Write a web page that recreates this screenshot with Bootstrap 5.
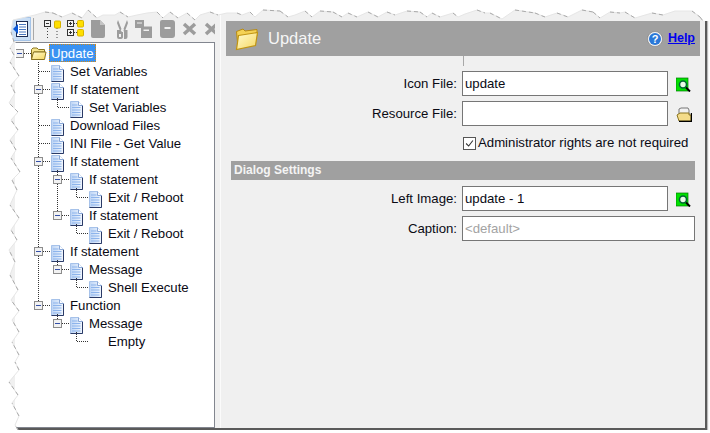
<!DOCTYPE html>
<html lang="en">
<head>
  <meta charset="UTF-8">
  <title>Update</title>
  <link href="https://cdn.jsdelivr.net/npm/bootstrap@5.3.2/dist/css/bootstrap.min.css" rel="stylesheet">
  <style>
    html, body { margin: 0; background: #fff; overflow: hidden; }
    body { font-family: "Liberation Sans", Arial, sans-serif; font-size: 13.2px; color: #0a0a14; }
    .fijo { flex: none; }
    .ventana { width: 707px; height: 430px; background: #f0f0f0; border-right: 2px solid #5a5a5a; border-bottom: 2px solid #5a5a5a; box-shadow: 1px 1px 1px #bbb; }
    .col-izq { width: 215px; height: 428px; padding-top: 17px; overflow: hidden; }
    .barra { height: 25px; padding-left: 11px; }
    .btn-activo { width: 20px; height: 24px; background: #c9def5; border: 1px solid #a5c4e8; }
    .separador { width: 1px; height: 22px; background: #a8a8a8; margin: 1px 6px 0 2px; }
    .slot { width: 23px; height: 24px; flex: none; }
    .arbol { margin-left: 15px; background: #fff; border: 1px solid #82868f; border-left-color: #fff; padding-top: 1px; height: 386px; }
    .fila-arbol { height: 18px; white-space: nowrap; }
    .guia { flex: none; display: block; }
    .ico-slot { width: 13px; flex: none; margin-right: 4px; height: 18px; padding-top: 1px; }
    .ico-carpeta { margin: 2px 0 0 -2px; display: block; }
    .etiqueta { border: 1px dotted transparent; padding: 0 1px; line-height: 17px; height: 18px; }
    .etiqueta.activa { background: #3a92f2; color: #fff; border-color: #d98a10; }
    .panel { width: 485px; border-left: 1px solid #fbfbfb; margin-left: 5px; padding: 21px 5px 0 5px; }
    .cabecera { height: 35px; background: #a0a0a0; padding: 0 5px 0 9px; color: #f6f6f6; font-size: 16.5px; }
    .titulo { margin-left: 9px; }
    .ayuda { font-size: 12.5px; font-weight: 700; color: #0000ee; margin-left: 5px; }
    .marca { width: 1px; height: 10px; background: #a8a8a8; margin: 0 0 5px 237px; }
    .rotulo { width: 231px; margin-right: 5px; flex: none; text-align: right; }
    .caja.form-control { width: 206px; height: 25px; min-height: 0; padding: 0 2px; border: 1px solid #767676; border-radius: 0; font-size: 13.2px; color: #0a0a14; box-shadow: none; flex: none; }
    .caja.larga { width: 233px; }
    .caja::placeholder { color: #a3a3a3; opacity: 1; }
    .ico-campo { margin: 2px 0 0 8px; flex: none; }
    .fila-campo { margin-bottom: 5px; height: 25px; }
    .fila-check { height: 14px; margin: 10px 0 11px 236px; }
    .form-check-input.marcar { width: 13px; height: 13px; margin: 0 2px 0 1px; border: 1px solid #555; border-radius: 0; background-color: #fff; flex: none; background-image: url("data:image/svg+xml,%3csvg xmlns='http://www.w3.org/2000/svg' viewBox='0 0 13 13'%3e%3cpath fill='none' stroke='%23333' stroke-width='1.3' d='M2.5 6.5l3 3 5-6.5'/%3e%3c/svg%3e"); background-size: 100% 100%; }
    .seccion { height: 19px; margin: 0 0 6px 5px; width: 464px; padding-left: 3px; background: #a0a0a0; color: #f4f4f4; font-weight: 700; font-size: 12px; line-height: 19px; }
    .rasgado { top: 0; left: 0; pointer-events: none; }
  </style>
</head>
<body>
  <svg width="0" height="0" class="position-absolute">
    <defs>
      <linearGradient id="gHoja" x1="0" y1="0" x2="1" y2="0">
        <stop offset="0" stop-color="#bcd4f5"/><stop offset="1" stop-color="#f2f7fe"/>
      </linearGradient>
      <linearGradient id="gCarpeta" x1="0" y1="0" x2="1" y2="1">
        <stop offset="0" stop-color="#fffbd0"/><stop offset="1" stop-color="#f6d860"/>
      </linearGradient>
      <symbol id="hoja" viewBox="0 0 13 17">
        <path d="M.5.5H8.5L12.5 4.5V16.5H.5Z" fill="url(#gHoja)" stroke="#a6c2ea"/>
        <path d="M12.5 4.5V16.5H.5" fill="none" stroke="#2a3a66"/>
        <path d="M8.5.5V4.5H12.5" fill="#fff" stroke="#8aa8d8"/>
        <path d="M2 4H7.5M2 6.5H10.5M2 9H10.5M2 11.5H10.5M2 14H10.5" stroke="#8db4ec"/>
      </symbol>
      <symbol id="carpetaAbierta" viewBox="0 0 17 14">
        <path d="M1.5 12.5V2.500L3 1H7L8.500 2.500H14.500V5H4Z" fill="#f6e58c" stroke="#8a7420"/>
        <path d="M1.500 12.500L3.500 5H16L14.500 12.500Z" fill="url(#gCarpeta)" stroke="#8a7420"/>
      </symbol>
      <symbol id="lupa" viewBox="0 0 15 15">
        <rect x="0" y="1" width="12" height="13" fill="#00e000" stroke="#007a00" stroke-width=".7"/>
        <circle cx="7" cy="7.500" r="3.500" fill="#eafbe8" stroke="#063" stroke-width="1.600"/>
        <path d="M10 10.500L14 14.500" stroke="#000" stroke-width="2"/>
      </symbol>
    </defs>
  </svg>

  <div class="ventana d-flex">
    <div class="col-izq fijo">
      <div class="barra d-flex align-items-start">
        <div class="btn-activo d-flex align-items-center justify-content-center fijo">
          <svg width="16" height="18" viewBox="0 0 16 18">
            <rect x="3.500" y="1.500" width="11" height="15" fill="#fff" stroke="#1d2b52"/>
            <path d="M6 4.500H13M6 7H13M6 9.500H13M6 12H13M6 14.500H13" stroke="#4a78c0"/>
            <path d="M5 4V14L0 9Z" fill="#0a58d8"/>
          </svg>
        </div>
        <div class="separador fijo"></div>
        <svg class="slot" viewBox="0 0 23 24">
          <rect x="4.500" y="3.500" width="6" height="6" fill="#f4f4f4" stroke="#333"/><path d="M6 6.500H9" stroke="#333"/>
          <path d="M7.500 11V23M17 11V23" stroke="#444" stroke-dasharray="1 2"/>
          <rect x="14.500" y="4" width="6" height="7" rx="1" fill="#ffdf00" stroke="#d8b400"/>
        </svg>
        <svg class="slot" viewBox="0 0 23 24">
          <rect x="4.500" y="3.500" width="6" height="6" fill="#f4f4f4" stroke="#333"/><path d="M6 6.500H9M7.500 5V8" stroke="#333"/>
          <rect x="4.500" y="12.500" width="6" height="6" fill="#f4f4f4" stroke="#333"/><path d="M6 15.500H9M7.500 14V17" stroke="#333"/>
          <path d="M11 6.500H14M11 15.500H14" stroke="#444" stroke-dasharray="1 1"/>
          <rect x="14.500" y="3.500" width="6" height="6.500" rx="1" fill="#ffdf00" stroke="#d8b400"/>
          <rect x="14.500" y="12.500" width="6" height="6.500" rx="1" fill="#ffdf00" stroke="#d8b400"/>
        </svg>
        <svg class="slot" viewBox="0 0 23 24">
          <path d="M5 3H14L19 8V19Q19 21 17 21H7Q5 21 5 19Z" fill="#9c9c9c"/><path d="M14 3V8H19" fill="#c4c4c4"/>
        </svg>
        <svg class="slot" viewBox="0 0 23 24" fill="#9c9c9c">
          <path d="M9 3L12.500 12L11 14L8 6ZM18 3L14.500 12L16 14L19 6Z"/>
          <path d="M8 13H11.500L13 15H14V20Q14 22 11 22H10Q8 22 8 20ZM10 17V20H12V17Z" fill-rule="evenodd"/>
          <path d="M14.500 13H18.500V20Q18.500 22 16.500 22H15V15Z"/>
        </svg>
        <svg class="slot" viewBox="0 0 23 24" fill="#9c9c9c">
          <path d="M3 3H12V11H3ZM5 5.500V6.500H10V5.500Z" fill-rule="evenodd"/>
          <path d="M9 9.500H20V21H9ZM11.500 12.500V14H17V12.500Z" fill-rule="evenodd"/>
        </svg>
        <svg class="slot" viewBox="0 0 23 24" fill="#9c9c9c">
          <path d="M7 3H17Q20 3 20 6V18Q20 21 17 21H8Q5 21 5 18V5Q5 3 7 3ZM9.500 10V12H15.500V10Z" fill-rule="evenodd"/>
        </svg>
        <svg class="slot" viewBox="0 0 23 24">
          <path d="M6 7L17 17M17 7L6 17" stroke="#9c9c9c" stroke-width="3.500"/>
        </svg>
        <svg class="slot" viewBox="0 0 23 24">
          <path d="M5 7L16 17M16 7L5 17" stroke="#9c9c9c" stroke-width="3.500"/>
        </svg>
      </div>
      <div class="arbol" id="arbol"></div>
    </div>

    <div class="panel fijo">
      <div class="cabecera d-flex align-items-center">
        <svg width="24" height="24" viewBox="0 0 24 24">
          <path d="M1.500 4.500L8 2L10 4L22 2.500V9L3 21Z" fill="#f4d255" stroke="#b88a10"/>
          <path d="M3.500 8.500L22.500 5.500L20.500 18.500L1.500 22.500Z" fill="url(#gCarpeta)" stroke="#c09412" stroke-width="1.200"/>
        </svg>
        <span class="titulo">Update</span>
        <svg class="ms-auto" width="16" height="16" viewBox="0 0 16 16">
          <circle cx="8" cy="8" r="7.500" fill="#f4f4f4" stroke="#777" stroke-width=".6"/>
          <circle cx="8" cy="8" r="6" fill="#2a78d8"/>
          <text x="8" y="12.200" text-anchor="middle" font-family="Liberation Sans" font-weight="700" font-size="11" fill="#fff">?</text>
        </svg>
        <a class="ayuda" href="#">Help</a>
      </div>
      <div class="marca"></div>

      <div class="fila-campo d-flex align-items-center">
        <label class="rotulo" for="iconFile">Icon File:</label>
        <input id="iconFile" class="caja form-control" type="text" value="update">
        <svg class="ico-campo" width="15" height="15"><use href="#lupa"/></svg>
      </div>
      <div class="fila-campo d-flex align-items-center mb-0">
        <label class="rotulo" for="resFile">Resource File:</label>
        <input id="resFile" class="caja form-control" type="text">
        <svg class="ico-campo" width="16" height="15" viewBox="0 0 16 15">
          <path d="M3 7V2L5 1H12L13 3V8Z" fill="#f2f2f2" stroke="#777"/>
          <path d="M1 8L4 6H13V8H15V14H3Z" fill="#f4dc8a" stroke="#8a7420"/>
          <path d="M15.500 6V14.500H3" fill="none" stroke="#000" stroke-width="1.400"/>
        </svg>
      </div>

      <div class="fila-check d-flex align-items-center">
        <input id="admin" class="form-check-input marcar" type="checkbox" checked>
        <label for="admin">Administrator rights are not required</label>
      </div>

      <div class="seccion">Dialog Settings</div>

      <div class="fila-campo d-flex align-items-center">
        <label class="rotulo" for="leftImg">Left Image:</label>
        <input id="leftImg" class="caja form-control" type="text" value="update - 1">
        <svg class="ico-campo" width="15" height="15"><use href="#lupa"/></svg>
      </div>
      <div class="fila-campo d-flex align-items-center">
        <label class="rotulo" for="caption">Caption:</label>
        <input id="caption" class="caja larga form-control" type="text" placeholder="<default>">
      </div>
    </div>
  </div>

  <svg id="rasgado" class="rasgado position-absolute" width="710" height="433" viewBox="0 0 710 433"></svg>

  <script>
    const arbol = { t: "Update", hijos: [
      { t: "Set Variables" },
      { t: "If statement", hijos: [ { t: "Set Variables" } ] },
      { t: "Download Files" },
      { t: "INI File - Get Value" },
      { t: "If statement", hijos: [
        { t: "If statement", hijos: [ { t: "Exit / Reboot" } ] },
        { t: "If statement", hijos: [ { t: "Exit / Reboot" } ] }
      ] },
      { t: "If statement", hijos: [
        { t: "Message", hijos: [ { t: "Shell Execute" } ] }
      ] },
      { t: "Function", hijos: [
        { t: "Message", hijos: [ { t: "Empty", sinIcono: true } ] }
      ] }
    ] };

    function pintarFila(nodo, nivel, guias, ultimo) {
      const cx = 3.5 + 19 * nivel;
      let lineas = "";
      guias.forEach((g) => {
        lineas += `<path d="M${3.5 + 19 * g} 0V18"/>`;
      });
      if (nivel > 0) {
        lineas += `<path d="M${cx} 0V${ultimo ? 9.5 : 18}"/>`;
      }
      lineas += `<path d="M${cx} 9.5H${cx + 11}"/>`;
      let caja = "";
      if (nodo.hijos) {
        caja = `<rect x="${cx - 4}" y="5.5" width="8" height="8" fill="#f2f2f2" stroke="#8c8c8c"/>
                <path d="M${cx - 2.5} 9.5H${cx + 2.5}" stroke="#3450a8"/>`;
      }
      let icono = `<svg width="13" height="17"><use href="#hoja"/></svg>`;
      if (nivel === 0) icono = `<svg class="ico-carpeta" width="17" height="14"><use href="#carpetaAbierta"/></svg>`;
      if (nodo.sinIcono) icono = "";
      return `<div class="fila-arbol d-flex">
        <svg class="guia" width="${16 + 19 * nivel}" height="18" shape-rendering="crispEdges">
          <g fill="none" stroke="#333" stroke-dasharray="1 1">${lineas}</g>${caja}
        </svg>
        <div class="ico-slot">${icono}</div>
        <div class="etiqueta${nivel === 0 ? " activa" : ""}">${nodo.t}</div>
      </div>`;
    }

    function pintarArbol(nodo, nivel, guias, ultimo) {
      let html = pintarFila(nodo, nivel, guias, ultimo);
      const siguientes = nivel > 0 && !ultimo ? guias.concat(nivel) : guias;
      (nodo.hijos || []).forEach((h, i) => {
        html += pintarArbol(h, nivel + 1, siguientes, i === nodo.hijos.length - 1);
      });
      return html;
    }
    document.getElementById("arbol").innerHTML = pintarArbol(arbol, 0, [], true);

    // borde rasgado de la captura
    const borde = [
      [18,430],[15,425],[19,416],[12,403],[18,395],[9,382],[19,370],[15,362],[19,355],[12,342],[19,332],[12,320],[19,311],[11,300],[18,290],[10,275],[15,262],[9,250],[17,240],[11,230],[19,218],[10,205],[17,190],[12,180],[20,172],[11,158],[16,150],[10,140],[18,130],[11,120],[18,112],[9,103],[15,93],[11,85],[19,76],[10,62],[14,55],[10,48],[14,42],[11,32],[13,20],
      [35,15],[45,12],[53,13],[62,17],[72,13],[82,18],[88,10],[97,18],[103,15],[115,15],[120,12],[128,17],[137,15],[147,13],[157,12],[163,18],[170,12],[178,18],[187,13],[195,20],[200,15],[210,12],[218,15],
      [227,13],[237,13],[242,15],[250,12],[255,17],[263,10],[280,11],[288,17],[295,15],[305,11],[312,17],[320,11],[333,12],[342,17],[348,13],[357,17],[368,12],[378,17],[387,12],[395,15],[407,11],[420,12],[427,17],[432,13],[440,17],[453,13],[458,17],
      [465,14],[477,10],[485,13],[490,13],[502,19],[515,10],[535,13],[545,17],[557,13],[568,17],[582,10],[593,12],[600,18],[610,12],[620,13],[625,12],[635,18],[652,13],[663,15],[675,11],[692,11],[700,17],[703,21]
    ];
    const puntos = borde.map((p) => p.join(",")).join(" ");
    let oscuros = "";
    borde.forEach((p, i) => {
      if (i === 0) return;
      const a = borde[i - 1];
      if (i > 40 && p[1] > a[1]) {
        oscuros += `M${a[0]} ${a[1]}L${p[0]} ${p[1]}`;
      }
      if (i <= 40 && p[0] < a[0]) {
        oscuros += `M${a[0]} ${a[1]}L${p[0]} ${p[1]}`;
      }
    });
    document.getElementById("rasgado").innerHTML =
      `<polygon points="0,433 ${puntos} 710,21 710,0 0,0" fill="#fff"/>
       <polyline points="${puntos}" fill="none" stroke="#e6e6e6"/>
       <path d="${oscuros}" fill="none" stroke="#999" stroke-width=".8" stroke-dasharray="4 3"/>`;
  </script>
  <script src="https://cdn.jsdelivr.net/npm/bootstrap@5.3.2/dist/js/bootstrap.bundle.min.js"></script>
</body>
</html>
